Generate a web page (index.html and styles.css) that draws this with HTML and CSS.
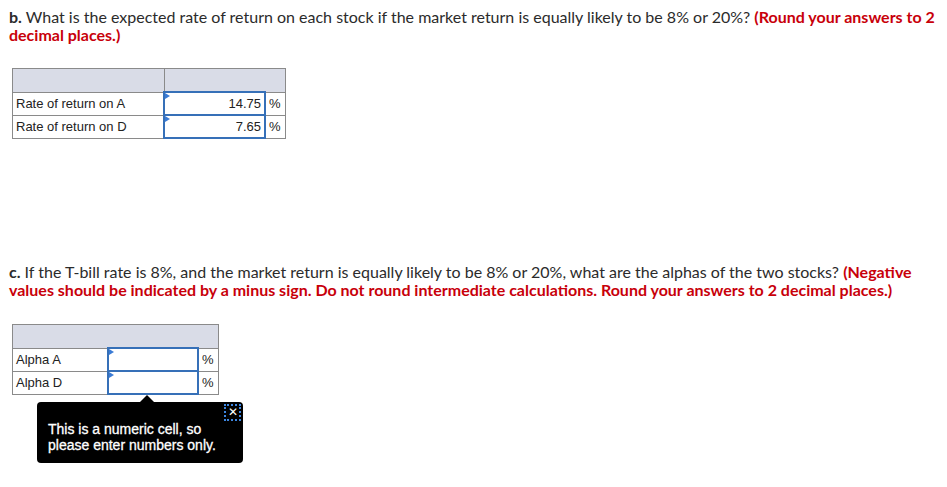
FILE: index.html
```html
<!DOCTYPE html>
<html lang="en">
<head>
  <meta charset="UTF-8">
  <title>Expected returns and alphas</title>
  <link rel="stylesheet" href="styles.css">
</head>
<body>
  <div class="question">
    <p class="prompt"><b>b.</b> What is the expected rate of return on each stock if the market return is equally likely to be 8% or 20%? <span class="hint">(Round your answers to 2 decimal places.)</span></p>

    <table class="grid grid-b">
      <tr class="head">
        <td class="label"></td>
        <td colspan="2"></td>
      </tr>
      <tr>
        <td class="label">Rate of return on A</td>
        <td class="entry"><span class="flag"></span>14.75</td>
        <td class="unit">%</td>
      </tr>
      <tr>
        <td class="label">Rate of return on D</td>
        <td class="entry"><span class="flag"></span>7.65</td>
        <td class="unit">%</td>
      </tr>
    </table>
  </div>

  <div class="question part-c">
    <p class="prompt"><b>c.</b> If the T-bill rate is 8%, and the market return is equally likely to be 8% or 20%, what are the alphas of the two stocks? <span class="hint">(Negative values should be indicated by a minus sign. Do not round intermediate calculations. Round your answers to 2 decimal places.)</span></p>

    <div class="table-wrap">
      <table class="grid grid-c">
        <tr class="head">
          <td colspan="3"></td>
        </tr>
        <tr>
          <td class="label">Alpha A</td>
          <td class="entry"><span class="flag"></span></td>
          <td class="unit">%</td>
        </tr>
        <tr>
          <td class="label">Alpha D</td>
          <td class="entry"><span class="flag"></span></td>
          <td class="unit">%</td>
        </tr>
      </table>

      <!-- aviso de celda numérica -->
      <div class="tip">
        <span class="tip-close">&#x2715;</span>
        This is a numeric cell, so<br>please enter numbers only.
      </div>
    </div>
  </div>
</body>
</html>
```

FILE: styles.css
```css
html {
  height: 100%;
}
body {
  margin: 0;
  min-height: 100%;
  box-sizing: border-box;
  padding: 8px 9px;
  background: #fff;
  color: #2b2b2b;
  font-family: Lato, "Open Sans", sans-serif;
}
.prompt {
  margin: 0;
  font-size: 16px;
  line-height: 18px;
  width: 932px;
}
.prompt b {
  font-weight: 700;
}
.hint {
  color: #c8000a;
  font-weight: 700;
}
.grid {
  border-collapse: collapse;
  font-family: "Liberation Sans", Arial, sans-serif;
  font-size: 13px;
  color: #222;
  margin-left: 3px;
}
.grid td {
  border: 1px solid #8a8a8a;
  height: 21px;
  padding: 0 3px;
}
.grid .head td {
  background: #d9dce7;
  height: 22px;
}
.grid-b {
  margin-top: 24px;
}
.grid-b .label {
  width: 144px;
}
.grid-b .entry {
  width: 93px;
}
.grid-c .label {
  width: 88px;
}
.grid-c .entry {
  width: 82px;
}
.unit {
  width: 13px;
}
.entry {
  position: relative;
  text-align: right;
  border: 2px solid #3670b8 !important;
}
.flag {
  position: absolute;
  left: 0;
  top: 0;
  border-left: 5px solid #3a7bd5;
  border-top: 3px solid transparent;
  border-bottom: 3px solid transparent;
}
.part-c {
  margin-top: 124px;
}
.table-wrap {
  position: relative;
  margin-top: 25px;
}
.tip {
  position: absolute;
  left: 28px;
  top: 78px;
  width: 187px;
  padding: 19px 8px 10px 11px;
  background: #000;
  color: #fff;
  border-radius: 4px;
  font-family: "Liberation Sans", Arial, sans-serif;
  font-size: 14px;
  line-height: 16px;
  -webkit-text-stroke: 0.3px #fff;
}
.tip::before {
  content: "";
  position: absolute;
  left: 103px;
  top: -7px;
  border-left: 7px solid transparent;
  border-right: 7px solid transparent;
  border-bottom: 7px solid #000;
}
.tip-close {
  position: absolute;
  right: 2px;
  top: 2px;
  width: 13px;
  height: 13px;
  border: 2px dotted #3d86e0;
  font-size: 12px;
  line-height: 13px;
  text-align: center;
  -webkit-text-stroke: 0;
}
```
